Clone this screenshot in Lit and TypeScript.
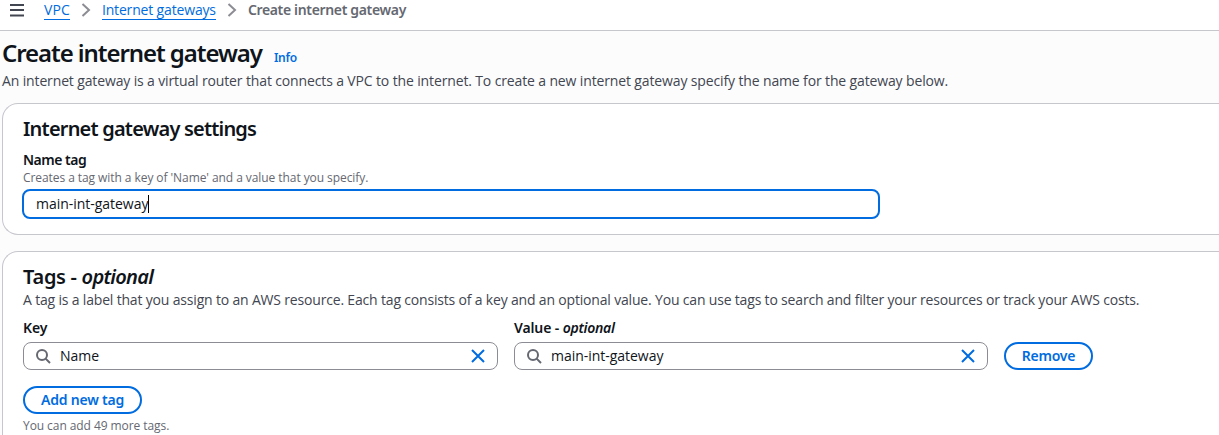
import { LitElement, html, css, svg } from "lit";
import { customElement, property } from "lit/decorators.js";

const chevron = html`<svg class="chevron" width="16" height="16" viewBox="0 0 16 16">
  <path d="m4.5 2 6.5 6-6.5 6" fill="none" stroke="#8c8c94" stroke-width="2" />
</svg>`;

const magnifier = svg`<circle cx="7" cy="7" r="5" /><path d="m10.6 10.6 4.400 4.400" />`;
const cross = svg`<path d="m2 2 12 12M14 2 2 14" />`;

@customElement("search-field")
class SearchField extends LitElement {
  @property() value = "";

  static styles = css`
    :host {
      display: flex;
      align-items: center;
      box-sizing: border-box;
      height: 28px;
      padding: 0 11px;
      border: 1px solid #8c8c94;
      border-radius: 8px;
      background: #fff;
      color: #0f141a;
      font: 400 14px/20px "Open Sans", "Noto Sans", sans-serif;
      letter-spacing: -0.03px;
    }
    svg {
      flex: none;
      fill: none;
      stroke-width: 2;
    }
    .search {
      stroke: #656871;
    }
    .clear {
      stroke: #006ce0;
    }
    .value {
      flex: 1;
      margin-left: 9px;
    }
  `;

  render() {
    return html`
      <svg class="search" width="16" height="16" viewBox="0 0 16 16">${magnifier}</svg>
      <span class="value">${this.value}</span>
      <svg class="clear" width="16" height="16" viewBox="0 0 16 16">${cross}</svg>
    `;
  }
}

@customElement("app-root")
class AppRoot extends LitElement {
  static styles = css`
    :host {
      display: block;
      height: 435px;
      overflow: hidden;
      background: #fcfcfd;
      color: #0f141a;
      font: 400 14px/20px "Open Sans", "Noto Sans", sans-serif;
      white-space: nowrap;
    }
    * {
      box-sizing: border-box;
    }
    h1,
    h2,
    p {
      margin: 0;
    }
    h1,
    h2,
    .current,
    .info,
    .label,
    .button {
      font-family: "Noto Sans", sans-serif;
      font-weight: 600;
    }
    .topbar {
      display: flex;
      align-items: flex-start;
      height: 31px;
      padding-left: 9px;
      background: #fff;
      border-bottom: 1px solid #c6c6cd;
    }
    .menu {
      margin: 2px 19px 0 0;
    }
    .link {
      height: 20px;
      color: #006ce0;
      border-bottom: 1px solid #006ce0;
      letter-spacing: -0.16px;
    }
    .vpc {
      letter-spacing: 0.1px;
    }
    .chevron {
      margin: 2px 8px 0;
    }
    .current {
      color: #656871;
      letter-spacing: -0.34px;
    }
    .page {
      padding: 7px 0 0 2px;
    }
    .title {
      display: flex;
      align-items: baseline;
      gap: 12px;
      height: 30px;
    }
    h1 {
      font-size: 24px;
      line-height: 30px;
      letter-spacing: -1.07px;
    }
    .info {
      font-size: 12px;
      color: #006ce0;
      letter-spacing: -0.2px;
    }
    .desc {
      color: #424650;
      letter-spacing: -0.135px;
    }
    .intro {
      margin-top: 3px;
    }
    .card {
      padding: 13px 0 15px 20px;
      border: 1px solid #c6c6cd;
      border-right: 0;
      border-radius: 16px 0 0 16px;
      background: #fff;
    }
    .settings {
      margin-top: 12px;
    }
    .tags {
      height: 240px;
      margin-top: 16px;
    }
    h2 {
      font-size: 20px;
      line-height: 24px;
      letter-spacing: -0.8px;
    }
    .tags h2 {
      letter-spacing: -0.3px;
    }
    .tags h2 i {
      letter-spacing: -0.72px;
    }
    .label {
      line-height: 20px;
      letter-spacing: -0.12px;
    }
    .label i {
      letter-spacing: -0.26px;
    }
    .name-label {
      margin: 10px 0 1px;
      line-height: 18px;
      letter-spacing: -0.5px;
    }
    .hint {
      font-size: 12px;
      line-height: 16px;
      color: #656871;
      letter-spacing: -0.07px;
    }
    .text-input {
      display: flex;
      align-items: center;
      width: 858px;
      height: 30px;
      margin: 3px 0 0 -1px;
      padding-left: 12px;
      border: 2px solid #006ce0;
      border-radius: 8px;
      letter-spacing: -0.03px;
    }
    .caret {
      width: 1px;
      height: 18px;
      margin-left: -0.4px;
      background: #000;
    }
    .tags-desc {
      margin-top: 1px;
      letter-spacing: -0.178px;
    }
    .grid {
      display: grid;
      grid-template-columns: 475px 474px 89px;
      column-gap: 16px;
      row-gap: 4px;
      margin-top: 8px;
    }
    .grid > * {
      grid-row: 2;
    }
    .grid > .label {
      grid-row: 1;
    }
    .button {
      display: flex;
      align-items: center;
      justify-content: center;
      height: 28px;
      border: 2px solid #006ce0;
      border-radius: 20px;
      color: #006ce0;
      letter-spacing: -0.2px;
    }
    .add {
      width: 119px;
      margin: 16px 0 4px;
    }
  `;

  render() {
    return html`
      <nav class="topbar">
        <svg class="menu" width="16" height="16" viewBox="0 0 16 16">
          <path d="M1 3h14M1 8h14M1 13.500h14" stroke="#424650" stroke-width="2" />
        </svg>
        <a class="link vpc">VPC</a>
        ${chevron}
        <a class="link">Internet gateways</a>
        ${chevron}
        <span class="current">Create internet gateway</span>
      </nav>
      <main class="page">
        <div class="title">
          <h1>Create internet gateway</h1>
          <a class="info">Info</a>
        </div>
        <p class="desc intro">An internet gateway is a virtual router that connects a VPC to the internet. To create a new internet gateway specify the name for the gateway below.</p>
        <section class="card settings">
          <h2>Internet gateway settings</h2>
          <div class="label name-label">Name tag</div>
          <div class="hint">Creates a tag with a key of 'Name' and a value that you specify.</div>
          <div class="text-input"><span>main-int-gateway</span><span class="caret"></span></div>
        </section>
        <section class="card tags">
          <h2>Tags - <i>optional</i></h2>
          <p class="desc tags-desc">A tag is a label that you assign to an AWS resource. Each tag consists of a key and an optional value. You can use tags to search and filter your resources or track your AWS costs.</p>
          <div class="grid">
            <div class="label">Key</div>
            <div class="label">Value - <i>optional</i></div>
            <search-field .value=${"Name"}></search-field>
            <search-field .value=${"main-int-gateway"}></search-field>
            <div class="button">Remove</div>
          </div>
          <div class="button add">Add new tag</div>
          <div class="hint">You can add 49 more tags.</div>
        </section>
      </main>
    `;
  }
}
